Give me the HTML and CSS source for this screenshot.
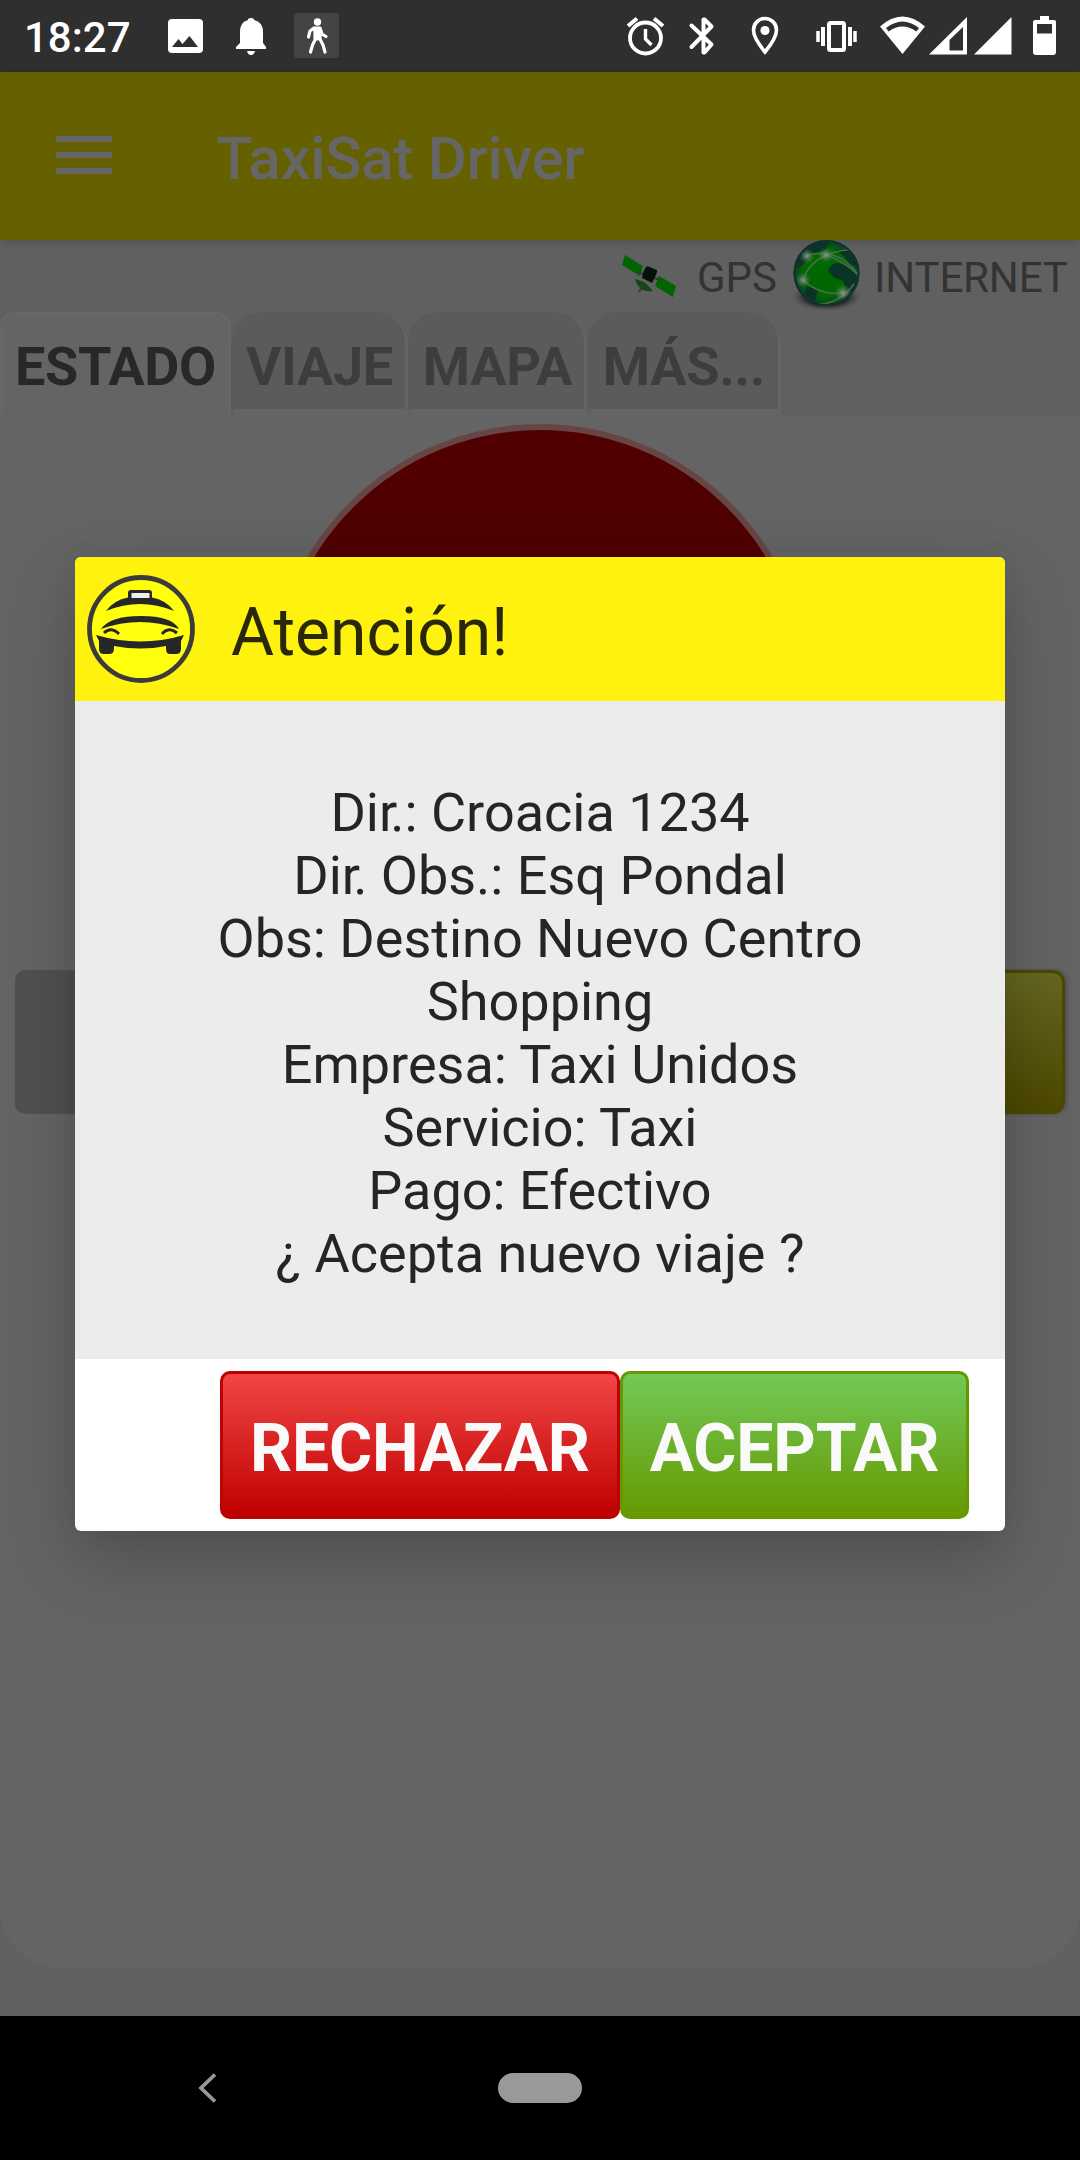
FILE: index.html
```html
<!DOCTYPE html>
<html lang="es">
<head>
<meta charset="utf-8">
<title>TaxiSat Driver</title>
<link rel="stylesheet" href="styles.css">
</head>
<body>
<div class="screen">
  <header class="status">
    <span class="clock">18:27</span>
    <svg class="status-left" viewBox="160 0 190 72" width="190" height="72" fill="#fff">
      <path fill-rule="evenodd" d="M172 19h27q4 0 4 4v26q0 4-4 4h-27q-4 0-4-4V23q0-4 4-4zM172 47h26l-8.500-11-7 8-4-5z"/>
      <path d="M236 49v-2l4-4V32q0-10 8-12v-1q3-2 6 0v1q9 2 9 12v11l3 4v2zM247 51h8q-1 4-4 4t-4-4z"/>
      <rect x="294" y="13" width="45" height="45" rx="3" fill="#444"/>
      <circle cx="317.500" cy="22" r="3.700"/>
      <path d="M314 28h6l2 6 4 2.500M314 28l-4 3-1.500 6M315 29v11l-2.500 5-2 7M320 29v10l3 6 2 7M317.500 28v11" fill="none" stroke="#fff" stroke-width="3.200" stroke-linecap="round" stroke-linejoin="round"/>
    </svg>
    <svg class="status-right" viewBox="620 0 460 72" width="460" height="72" fill="#fff">
      <g fill="none" stroke="#fff">
        <circle cx="645.500" cy="38" r="15.500" stroke-width="3.800"/>
        <path d="M645.500 29v10l6 6" stroke-width="3.400"/>
        <path d="M628 26l9-7.500M663 26l-9-7.500" stroke-width="4"/>
        <path d="M691.500 25.500l20 19-7 8h-1v-33h1l7 7-20 20.500" stroke-width="4" stroke-linejoin="round" stroke-linecap="round"/>
        <path d="M765 52q-11.500-14-11.500-22a11.500 11.500 0 0 1 23 0q0 8-11.500 22z" stroke-width="3.600"/>
        <rect x="829" y="23" width="15" height="27" rx="1.500" stroke-width="4"/>
        <path d="M823 27v19M850 27v19" stroke-width="4"/>
        <path d="M818 31v11M855 31v11" stroke-width="3.500"/>
      </g>
      <circle cx="765" cy="30.500" r="4.600"/>
      <path fill-rule="evenodd" d="M880 26.500q22.500-20 45 0L902.500 54zM886 28l2.700 3.500q13.800-10 27.600 0L919 28q-16.500-13-33 0z"/>
      <path fill-rule="evenodd" d="M929 54.500L967 17v37.500zM949.500 40v10.500H963V27z"/>
      <path d="M974 54.500L1011.500 17v37.500z"/>
      <path fill-rule="evenodd" d="M1035 20h5v-4h9v4h5q2 0 2 2v30q0 3-3 3h-17q-3 0-3-3V22q0-2 2-2zM1037 24v9.500h15V24z"/>
    </svg>
  </header>

  <div class="appbar">
    <svg class="menu" viewBox="0 0 56 38" width="56" height="38"><path d="M0 3h56M0 19h56M0 35h56" stroke="#666" stroke-width="6"/></svg>
    <h1 class="app-title">TaxiSat Driver</h1>
  </div>

  <div class="signals">
    <svg viewBox="0 0 56 48" width="56" height="48">
      <path fill="#006400" d="M4 3l18 11-3 10L1 13zM38 24l17 10-3 11-18-11z"/>
      <path fill="#164516" d="M14 27q9 1 18 12-14 2-18-12z"/>
      <path d="M17 20l22 8M22 33l-4 7" stroke="#333b33" stroke-width="2"/>
      <path fill="#051205" d="M26 14l10 4q1 2-5 13l-10-5q1-8 5-12z"/>
    </svg>
    <span class="gps">GPS</span>
    <svg class="globe" viewBox="0 0 72 72" width="72" height="72">
      <defs>
        <radialGradient id="sea"><stop offset=".7" stop-color="#006800"/><stop offset="1" stop-color="#0a3c2e"/></radialGradient>
        <radialGradient id="glow"><stop offset="0" stop-color="#8a9a8a"/><stop offset="1" stop-color="#456b45" stop-opacity="0"/></radialGradient>
        <radialGradient id="ground"><stop offset=".6" stop-color="#2c2c2c"/><stop offset="1" stop-color="#606060" stop-opacity="0"/></radialGradient>
        <clipPath id="disc"><circle cx="34.500" cy="33" r="33"/></clipPath>
      </defs>
      <ellipse cx="34.500" cy="57" rx="37" ry="15" fill="url(#ground)"/>
      <circle cx="34.500" cy="33" r="33" fill="url(#sea)"/>
      <g clip-path="url(#disc)">
        <path fill="#0a3427" d="M3 25Q5 6 24 2l13 0-3 8-13 3-6 8-9 7zM36 31q2-8 10-8l10 3 10 6-3 17q-6 4-9-1l-3-7q-3-2-9-3zM43 10l17-2 7 18-9-1-6-9zM15 46l11 4-3 12-11-8z"/>
        <path d="M11 40Q17 22 35 15T60 11M16 15Q47 8 66 34M11 40q17 16 40 13M35 15q25 11 32 22M28 64q20-1 34-20" fill="none" stroke="#4a704a" stroke-width="1.500"/>
        <circle cx="15" cy="16" r="8" fill="url(#glow)"/><circle cx="34" cy="15" r="8" fill="url(#glow)"/><circle cx="11" cy="40" r="8" fill="url(#glow)"/><circle cx="51" cy="53" r="9" fill="url(#glow)"/>
      </g>
      <circle cx="34.500" cy="33" r="32" fill="none" stroke="#123129" stroke-width="2"/>
    </svg>
    <span class="net">INTERNET</span>
  </div>

  <nav class="tabs">
    <div class="tab active">ESTADO</div>
    <div class="tab viaje">VIAJE</div>
    <div class="tab mapa">MAPA</div>
    <div class="tab mas">MÁS...</div>
  </nav>

  <main class="panel">
    <div class="lamp"></div>
    <div class="actions"><div class="action off"></div><div class="action on"></div></div>
  </main>

  <footer class="navbar">
    <svg viewBox="0 0 20 30" width="20" height="30"><path d="M17 1.500L3 15l14 13.500" fill="none" stroke="#999" stroke-width="3.800"/></svg>
    <span class="home"></span>
  </footer>

  <section class="dialog">
    <div class="dialog-head">
      <svg viewBox="0 0 108 108" width="108" height="108">
        <circle cx="54" cy="54" r="51.500" fill="#ffff0c" stroke="#3b3b3b" stroke-width="4.800"/>
        <g fill="#262626">
          <path d="M19 36Q27 25 41 22.500V18q0-3 3-3h18q3 0 3 3v4.500q14 2.500 22 13.500-34-14-68 0z"/>
          <path d="M14 54q9-13 40-13t38 13q-39-14-78 0z"/>
          <path d="M9 60q45 13 88 0l-3 6v8q0 5-5 5h-6q-4 0-4-5v-3q-25 5-52 0v3q0 5-5 5h-5q-5 0-5-5v-8z"/>
        </g>
        <path d="M44.500 18h18v5h-18z" fill="#eee"/>
        <path d="M17 58q7-7 15 1M75 59q7-8 15-1" fill="none" stroke="#262626" stroke-width="3"/>
      </svg>
      <h2 class="dialog-title">Atención!</h2>
    </div>
    <div class="dialog-body">Di<span class="tight">r</span>.: Croacia 1234<br>Di<span class="tight">r</span>. Obs.: Esq Pondal<br>Obs: Destino Nuevo Centro<br>Shopping<br>Empresa: Taxi Unidos<br>Servicio: Taxi<br>Pago: Efectivo<br>¿ Acepta nuevo viaje ?</div>
    <div class="dialog-actions">
      <button class="btn reject">RECHAZAR</button>
      <button class="btn accept">ACEPTAR</button>
    </div>
  </section>
</div>
</body>
</html>
```
FILE: styles.css
```css
* { box-sizing: border-box; }
body { margin: 0; font-family: Roboto, sans-serif; }
h1, h2 { margin: 0; }
svg { display: block; flex: none; }
.screen { position: relative; width: 1080px; height: 2160px; background: #606060; display: flex; flex-direction: column; overflow: hidden; }
.status { height: 72px; flex: none; background: #2f2f2f; display: flex; align-items: center; justify-content: space-between; padding-left: 24px; color: #fff; }
.clock { width: 136px; font-size: 42px; font-weight: 500; line-height: 72px; padding-top: 3px; }
.status-left { margin-right: auto; }
.appbar { height: 168px; flex: none; background: #656000; display: flex; align-items: center; padding-left: 56px; z-index: 1; box-shadow: 0 2px 9px rgba(0,0,0,.16); }
.menu { margin-top: -2px; }
.app-title { margin-left: 104px; font-size: 60px; font-weight: 500; line-height: 70px; letter-spacing: -.3px; color: #666; padding-top: 5px; }
.signals { height: 72px; flex: none; display: flex; align-items: center; padding-left: 621px; font-size: 42px; color: #333; white-space: nowrap; position: relative; z-index: 2; }
.gps { margin-left: 20px; width: 95px; padding-top: 3px; }
.net { margin-left: 10px; padding-top: 3px; letter-spacing: -.15px; }
.tabs { height: 103px; flex: none; display: flex; gap: 3px; padding-bottom: 6px; font-size: 54px; font-weight: 700; line-height: 109px; text-align: center; letter-spacing: -.3px; color: #3d3d3d; }
.tab { height: 97px; padding-left: 3px; background: #5b5b5b; border-radius: 30px 30px 0 0; box-shadow: 3px 3px 0 #656565, 3px 6px 0 #656565; }
.tab.active { width: 231px; height: 103px; margin-right: -3px; padding-left: 0; background: #646464; border: 3px solid #676767; border-bottom: 0; border-radius: 15px 15px 0 0; box-shadow: none; color: #282828; line-height: 103px; }
.tab.viaje { width: 174px; }
.tab.mapa { width: 176px; }
.tab.mas { width: 191px; }
.panel { height: 1553px; flex: none; background: #646464; border-radius: 0 0 60px 60px; padding-top: 9px; }
.lamp { width: 540px; height: 540px; margin: 0 auto; border: 6px solid #674545; border-radius: 50%; background: #500000; }
.actions { display: flex; justify-content: space-between; padding: 6px 15px 0; }
.action { width: 500px; height: 144px; border-radius: 10px; }
.off { background: #505050; }
.on { border: 3px solid #4b4800; border-radius: 12px; background: linear-gradient(#666622, #4c4800); box-shadow: 2px 0 4px rgba(0,0,0,.2); }
.navbar { height: 144px; flex: none; margin-top: auto; background: #000; display: flex; align-items: center; padding-left: 198px; gap: 280px; z-index: 1; }
.home { width: 84px; height: 30px; border-radius: 15px; background: #999; }
.dialog { position: absolute; left: 75px; top: 557px; width: 930px; height: 974px; border-radius: 6px; overflow: hidden; background: #fff; box-shadow: 0 28px 70px rgba(0,0,0,.21), 0 0 28px rgba(0,0,0,.05); }
.dialog-head { height: 144px; background: #fff20f; display: flex; align-items: center; padding-left: 12px; }
.dialog-title { margin-left: 36px; padding-top: 8px; font-size: 66px; font-weight: 400; line-height: 78px; color: #2a280a; }
.dialog-body { height: 658px; background: #ececec; padding-top: 80px; font-size: 54px; line-height: 63px; text-align: center; color: #252525; }
.tight { letter-spacing: -7px; }
.dialog-actions { height: 172px; display: flex; padding: 12px 36px 0 145px; }
.btn { height: 148px; padding: 8px 0 0; border-radius: 10px; font: 700 66px/78px Roboto, sans-serif; letter-spacing: -.15px; color: #fafafa; }
.reject { width: 400px; border: 3px solid #bd0000; background: linear-gradient(#f14545, #c00000); }
.accept { width: 349px; border: 3px solid #669900; background: linear-gradient(#72c958, #669900); }
```
